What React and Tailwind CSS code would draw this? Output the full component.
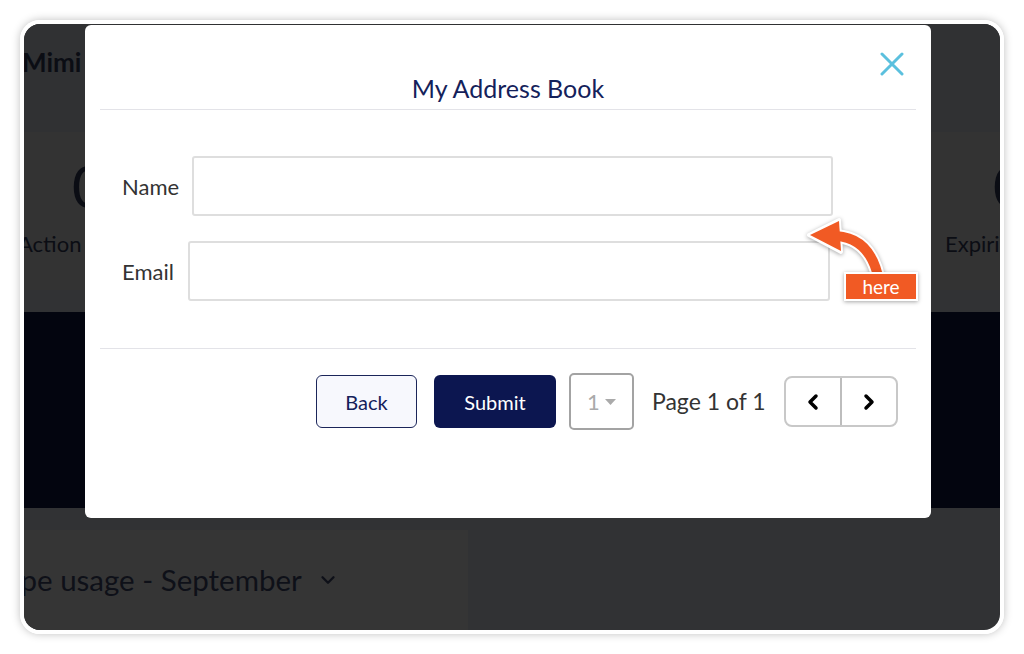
/*
  Address book modal over a dimmed dashboard, with a "here" callout.
*/
import { ChevronLeft, ChevronRight, ChevronDown } from 'lucide-react';

const FONT = "font-['Lato','Open_Sans',sans-serif]";

function CloseIcon() {
  return (
    <svg width="24" height="24" viewBox="0 0 24 24" className="block">
      <path d="M2 2 L22 22 M22 2 L2 22" stroke="#5bc0de" strokeWidth="3" strokeLinecap="round" fill="none" />
    </svg>
  );
}

function Callout() {
  return (
    <>
      <svg
        className="absolute left-[776px] top-[186px] drop-shadow-[0_1px_2px_rgba(0,0,0,0.35)]"
        width="110"
        height="90"
        viewBox="800 210 110 90"
      >
        <path d="M836 236 Q869 238 878 276" stroke="#fff" strokeWidth="14" fill="none" />
        <path d="M809 235 L839 220 L841 252 Z" fill="#fff" stroke="#fff" strokeWidth="4" strokeLinejoin="round" />
        <path d="M836 236 Q869 238 878 276" stroke="#f15a24" strokeWidth="10" fill="none" />
        <path d="M810 235 L839 221 L841 251 Z" fill="#f15a24" />
      </svg>
      <div className="absolute left-[820px] top-[248px] w-[74px] h-[29px] bg-[#f15a24] border-2 border-white shadow-[0_1px_4px_rgba(0,0,0,0.35)] flex items-center justify-center">
        <span className="text-white text-[19px] leading-none">here</span>
      </div>
    </>
  );
}

function Modal() {
  return (
    <div className="absolute left-[61px] top-[1px] w-[846px] h-[493px] bg-white rounded-md">
      <button className="absolute left-[795px] top-[27px]">
        <CloseIcon />
      </button>

      <div className="mx-[15px] border-b border-[#e3e3e8] pt-[48px] pb-[6px] text-center">
        <h2 className="text-[25px] leading-[30px] text-[#14215a]">My Address Book</h2>
      </div>

      <div className="mx-[15px] pl-[22px] pt-[46px] pb-[47px] border-b border-[#e3e3e8]">
        <div className="flex items-center">
          <label className="text-[22px] text-[#333] mr-[10px] w-[60px] whitespace-nowrap">Name</label>
          <input className="w-[641px] h-[60px] border-2 border-[#dedede] rounded-[3px] outline-none" />
        </div>
        <div className="flex items-center mt-[25px]">
          <label className="text-[22px] text-[#333] mr-[10px] w-[56px] whitespace-nowrap">Email</label>
          <input className="w-[642px] h-[60px] border-2 border-[#dedede] rounded-[3px] outline-none" />
        </div>
      </div>

      <div className="mx-[15px] pr-[18px] pt-[24px] flex items-center justify-end">
        <button className="w-[101px] h-[53px] rounded-[6px] border border-[#1b2559] bg-[#f7f8fd] text-[#14215a] text-[20px]">
          Back
        </button>
        <button className="ml-[17px] w-[122px] h-[53px] rounded-[6px] bg-[#0c1650] text-white text-[20px]">
          Submit
        </button>
        <div className="ml-[13px] w-[65px] h-[57px] rounded-[5px] border-2 border-[#a3a3a3] flex items-center justify-center gap-[5px]">
          <span className="text-[22px] text-[#aaa]">1</span>
          <svg width="11" height="6" viewBox="0 0 11 6"><path d="M0 0 L11 0 L5.5 6 Z" fill="#aaa" /></svg>
        </div>
        <span className="ml-[18px] w-[114px] text-[23px] text-[#333] whitespace-nowrap">Page 1 of 1</span>
        <div className="ml-[18px] w-[114px] h-[51px] rounded-[8px] border-2 border-[#c8c8c8] flex">
          <button className="w-[56px] h-full flex items-center justify-center border-r-2 border-[#bdbdbd]">
            <ChevronLeft size={24} strokeWidth={3.5} color="#000" />
          </button>
          <button className="flex-1 h-full flex items-center justify-center">
            <ChevronRight size={24} strokeWidth={3.5} color="#000" />
          </button>
        </div>
      </div>
    </div>
  );
}

export default function App() {
  return (
    <div className={`w-[1024px] h-[654px] bg-white pt-[20px] pl-[20px] ${FONT}`}>
      <div className="w-[984px] h-[614px] rounded-[20px] border-4 border-white shadow-[0_0_8px_rgba(0,0,0,0.25)]">
        <div className="relative w-full h-full rounded-[16px] overflow-hidden bg-[#313234] flex flex-col">
          {/* dimmed dashboard behind the modal */}
          <div className="h-[108px] bg-[#303133] pt-[22px]">
            <span className="block -ml-[2px] text-[26px] leading-[32px] font-bold text-[#0b0d14]">Mimi</span>
          </div>
          <div className="h-[158px] bg-[#333333] flex">
            <div className="w-[300px] -ml-[6px] shrink-0 pt-[22px] text-[#0b0d14]">
              <div className="ml-[54px] text-[58px] leading-[64px]">0</div>
              <div className="text-[22px] mt-[9px] whitespace-nowrap">Action Items</div>
            </div>
            <div className="w-[200px] ml-[627px] shrink-0 pt-[22px] text-[#0b0d14]">
              <div className="ml-[48px] text-[58px] leading-[64px]">0</div>
              <div className="text-[22px] mt-[9px] whitespace-nowrap">Expiring Soon</div>
            </div>
          </div>
          <div className="h-[22px]" />
          <div className="h-[196px] bg-[#03050f]" />
          <div className="flex-1 pt-[22px]">
            <div className="w-[444px] h-full bg-[#353535] flex items-center overflow-hidden">
              <span className="-ml-[50px] text-[29.5px] text-[#0e1018] whitespace-nowrap">Scope usage - September</span>
              <ChevronDown size={22} strokeWidth={2.5} color="#0e1018" className="ml-[15px]" />
            </div>
          </div>

          <Modal />
          <Callout />
        </div>
      </div>
    </div>
  );
}
